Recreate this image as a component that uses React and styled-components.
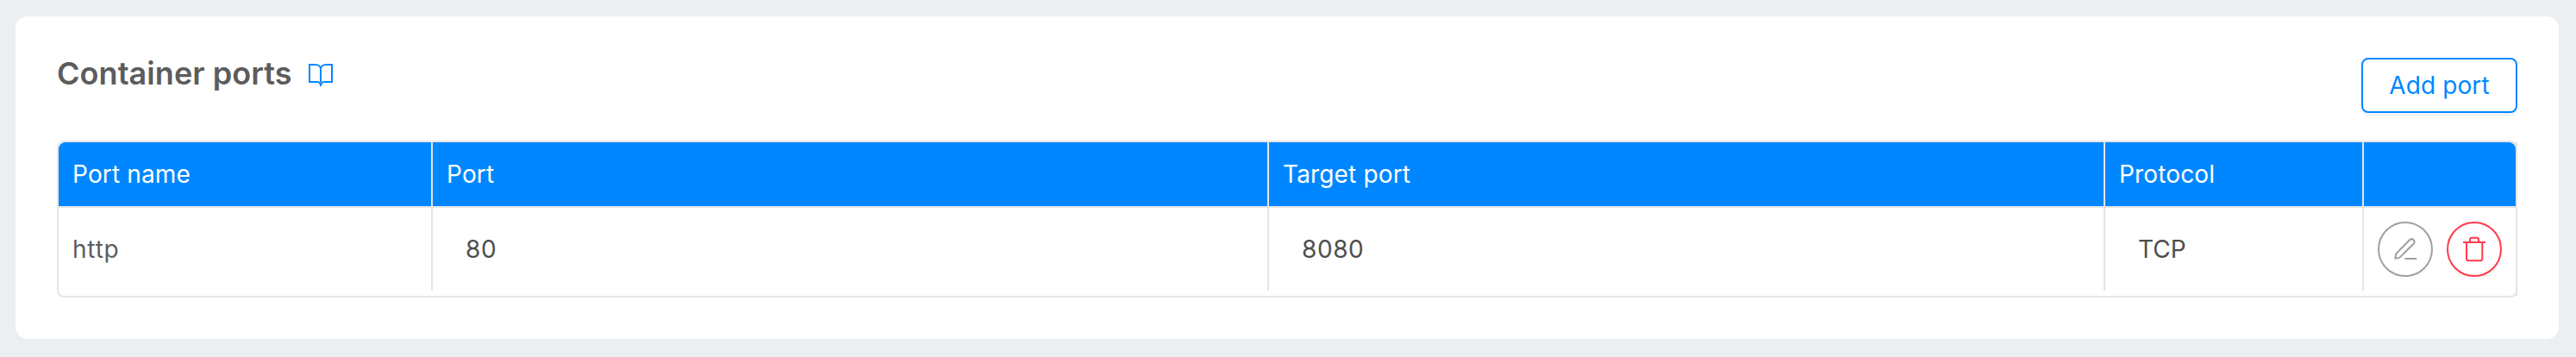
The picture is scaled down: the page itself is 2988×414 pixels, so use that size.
import React from 'react';
import styled, { createGlobalStyle } from 'styled-components';

const GlobalStyle = createGlobalStyle`
  * { box-sizing: border-box; }
  body {
    margin: 0;
    background: #ebeff2;
    font-family: Inter, "Liberation Sans", sans-serif;
    font-size: 28px;
    font-weight: 370;
  }
`;

const line = '#e5e5e5';
const blue = '#0087ff';

const Page = styled.main`
  height: 414px;
  padding: 19px 20px 21px 18px;
`;

const Card = styled.section`
  height: 374px;
  padding: 48px;
  border-radius: 14px;
  background: #fff;
`;

const Header = styled.header`
  display: flex;
  justify-content: space-between;
  align-items: flex-start;
  height: 96px;
`;

const Title = styled.h2`
  display: flex;
  align-items: flex-start;
  margin: -1px 0 0;
  color: #5c5c5c;
  font-size: 36px;
  font-weight: 600;
  line-height: 38px;
  letter-spacing: 0.06px;
  white-space: nowrap;
`;

const DocsIcon = styled.svg`
  width: 32px;
  height: 32px;
  margin: 4px 0 0 17.5px;
  fill: none;
  stroke: ${blue};
  stroke-width: 2;
`;

const AddButton = styled.button`
  width: 181px;
  height: 64px;
  padding: 0;
  border: 2px solid ${blue};
  border-radius: 8px;
  background: #fff;
  box-shadow: 0 4px 0 rgba(0, 0, 0, 0.04);
  color: ${blue};
  font: inherit;
  letter-spacing: 0.1px;
`;

const Table = styled.div`
  position: relative;
  height: 182px;
  border: 2px solid ${line};
  border-radius: 8px;

  &::after {
    content: '';
    position: absolute;
    top: 0;
    right: -2px;
    bottom: 0;
    width: 2px;
    background: ${line};
  }
`;

const Row = styled.div`
  display: grid;
  grid-template-columns: 434px 970px 970px 300px 176px;
`;

const HeadRow = styled(Row)`
  height: 76px;
  border-bottom: 2px solid ${line};
  border-radius: 8px 8px 0 0;
  background: ${blue};
  background-clip: padding-box;
  color: #fff;
`;

const BodyRow = styled(Row)`
  height: 96px;
  color: #4d4d4d;
`;

const Cell = styled.div`
  display: flex;
  align-items: center;
  padding-left: ${(p) => (p.$inset ? 38 : 16)}px;
  border-right: ${(p) => (p.$last ? 0 : 2)}px solid ${line};
  color: ${(p) => (p.$muted ? '#5c5c5c' : 'inherit')};
  letter-spacing: ${(p) => p.$tracking ?? 0.15}px;
  line-height: 44px;
`;

const Actions = styled(Cell)`
  gap: 16px;
`;

const CircleButton = styled.button`
  display: flex;
  align-items: center;
  justify-content: center;
  width: 64px;
  height: 64px;
  padding: 0;
  border: 2px solid ${(p) => p.$tone};
  border-radius: 50%;
  background: #fff;
  box-shadow: 0 4px 0 rgba(0, 0, 0, ${(p) => p.$shade});
  clip-path: inset(0);
  color: ${(p) => p.$tone};
`;

const Glyph = styled.svg`
  flex: none;
  width: 32px;
  height: 32px;
  fill: none;
  stroke: currentColor;
  stroke-width: 2;
`;

export default function App() {
  return (
    <>
      <GlobalStyle />
      <Page>
        <Card>
          <Header>
            <Title>
              Container ports
              <DocsIcon viewBox="0 0 32 32">
                <path d="M16 25V10C16 7 13 5 9.500 5H3V25H12C14.500 25 16 26 16 30C16 26 17.500 25 20 25H29V5H22.500C19 5 16 7 16 10" />
              </DocsIcon>
            </Title>
            <AddButton>Add port</AddButton>
          </Header>
          <Table>
            <HeadRow>
              <Cell>Port name</Cell>
              <Cell>Port</Cell>
              <Cell>Target port</Cell>
              <Cell>Protocol</Cell>
              <Cell $last />
            </HeadRow>
            <BodyRow>
              <Cell $muted $tracking={0.8}>http</Cell>
              <Cell $inset $tracking={0.7}>80</Cell>
              <Cell $inset $tracking={0.6}>8080</Cell>
              <Cell $inset $tracking={0}>TCP</Cell>
              <Actions $last>
                <CircleButton $tone="#a0a0a0" $shade={0.015} aria-label="Edit">
                  <Glyph viewBox="0 0 32 32">
                    <path d="M4.300 26.800L5.300 21.300L21.300 5A3.200 3.200 0 0 1 25.800 9.500L9.500 25.600Z" strokeLinejoin="round" />
                    <path d="M15.500 27H29.300" />
                  </Glyph>
                </CircleButton>
                <CircleButton $tone="#ff3b4b" $shade={0.04} aria-label="Delete">
                  <Glyph viewBox="0 0 32 32">
                    <path d="M3 8H29" />
                    <path d="M7 8V27Q7 29.300 9.300 29.300H23Q25.300 29.300 25.300 27V8" />
                    <path d="M11 8V5Q11 2.800 13.200 2.800H18.800Q21 2.800 21 5V8" />
                  </Glyph>
                </CircleButton>
              </Actions>
            </BodyRow>
          </Table>
        </Card>
      </Page>
    </>
  );
}
